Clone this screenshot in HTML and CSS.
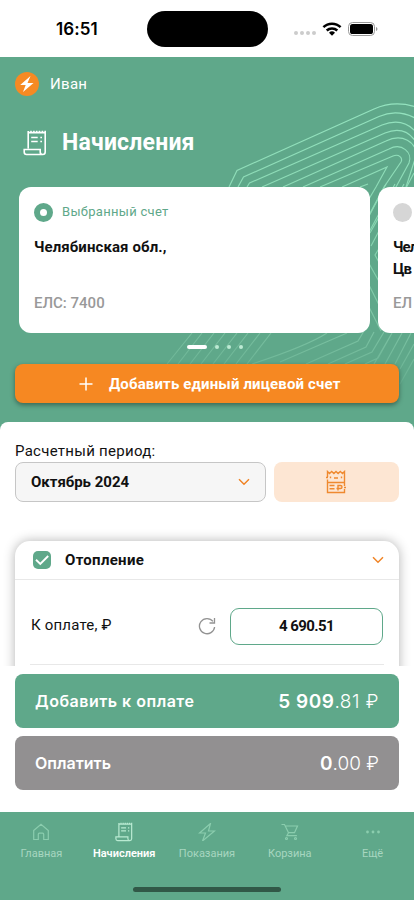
FILE: index.html
```html
<!DOCTYPE html>
<html lang="ru">
<head>
<meta charset="utf-8">
<meta name="viewport" content="width=device-width, initial-scale=1">
<title>Начисления</title>
<link rel="stylesheet" href="styles.css">
</head>
<body>
<svg class="defs" width="0" height="0">
  <symbol id="bill" viewBox="0 0 24 26">
    <path d="M5.200 18.500V1M5.200 2.600h17M8 3V.8M10.900 3V.8M13.700 3V.8M16.500 3V.8M19.400 3V.8M22.200.8V22a2.500 2.500 0 0 1-2.500 2.500H3.500C2 24.500 1.200 23.400 1.200 22v-2.500h16V22a2.500 2.500 0 0 0 2.500 2.500M8.200 7.500h6.500M8.200 11.500h6.500M17.300 7.500H19M17.300 11.500H19" fill="none" stroke="currentColor" stroke-width="1.600"/>
  </symbol>
  <symbol id="chevron" viewBox="0 0 12 8">
    <path d="M1 1.200l5 5 5-5" fill="none" stroke="#f08426" stroke-width="1.500"/>
  </symbol>
</svg>
<div class="screen">
  <div class="status">
    <span class="clock">16:51</span>
    <span class="island"></span>
    <span class="signals">
      <i class="cell"></i><i class="cell"></i><i class="cell"></i><i class="cell"></i>
      <svg class="wifi" viewBox="0 0 20 14"><path d="M1.4 5.2a12.4 12.4 0 0 1 17.2 0M4.7 8.5a7.7 7.7 0 0 1 10.6 0" fill="none" stroke="#000" stroke-width="2.5"/><path d="M10 13.7l-3-3a4.3 4.3 0 0 1 6 0z"/></svg>
      <svg class="battery" viewBox="0 0 30 14"><rect x=".5" y=".5" width="26" height="13" rx="4" fill="none" stroke="#999"/><rect x="2" y="2" width="23" height="10" rx="2.6"/><path d="M28 5v4c2-.8 2-3.2 0-4z" fill="#999"/></svg>
    </span>
  </div>

  <header class="hero">
    <svg class="pattern" viewBox="0 57 414 365">
      <defs><linearGradient id="fade" x1="0" y1="104" x2="0" y2="405" gradientUnits="userSpaceOnUse"><stop offset="0" stop-color="#94e3bf"/><stop offset=".35" stop-color="#8bd9b4"/><stop offset=".75" stop-color="#7cc3a3"/><stop offset="1" stop-color="#60a98b"/></linearGradient></defs>
      <g fill="none" stroke="url(#fade)" stroke-width="1.150">
        <path d="M229 187l8-16.500L374 109q20-9 42-2"/>
        <path d="M238 187l5.500-10L379 116.500q18-8 37 2"/>
        <path d="M247 187l2.500-4L382 125q20-8 33 6"/>
        <path d="M262 187L385 133q20-8 31 9"/>
        <path d="M283 187L386 141c16-8 31 1 30 15l-10 31"/>
        <path d="M303 187l86-38c13-7 24 4 20 14l-13 24-26 46"/>
        <path d="M320 187l73-31c6-2.500 10 2 8 6l-17 25-16 30"/>
        <path d="M342 187l45-20-11 20-10 17M360 187l8-3"/>
        <path d="M386 184l-18 34M395 184l-27 50M404 184l-33 62M380 247l-5 8 6 11M367 260l14 25M367 281l14 28M367 303l14 28M414 173l-8 15"/>
        <path d="M167 364l25-31M178 364l24-31M190 364l24-31M201 364l24-31M213 364l24-31M224 364l24-31M236 364l24-31M247 364l24-31" opacity=".9"/>
        <path d="M252 364q55-18 75-31M280 362l67-29M306 364l52-23 6-10M328 364l38-17 8-15M345 364l27-12 12-20M365 364l13-6 14-25M374 364l18-31M385 364l17-31M395 364l16-31M400 369l14-25M400 384l14-25"/>
      </g>
    </svg>
    <div class="user"><svg class="avatar" viewBox="0 0 24 24"><circle cx="12" cy="12" r="12" fill="#f68a23"/><path d="M15.500 4L5.200 13h5.500L8 20l10.500-9h-6z" fill="#fff"/></svg><span class="t-user">Иван</span></div>
    <div class="heading"><svg class="bill-lg"><use href="#bill"/></svg><h1>Начисления</h1></div>
    <div class="accounts">
      <article class="account">
        <div class="pick"><i class="radio on"></i><span class="t-pick">Выбранный счет</span></div>
        <p class="address">Челябинская обл.,</p>
        <p class="els">ЕЛС: 7400</p>
      </article>
      <article class="account next">
        <div class="pick"><i class="radio"></i></div>
        <p class="address">Чел<br>Цв</p>
        <p class="els">ЕЛ</p>
      </article>
    </div>
    <div class="dots"><b></b><i></i><i></i><i></i></div>
    <button class="add"><svg viewBox="0 0 14 14" width="14" height="14"><path d="M7 .5v13M.5 7h13" stroke="#fff" stroke-width="1.500"/></svg><span class="t-add">Добавить единый лицевой счет</span></button>
  </header>

  <main class="content">
    <div class="label">Расчетный период:</div>
    <div class="filters">
      <div class="month"><span>Октябрь 2024</span><svg class="chev"><use href="#chevron"/></svg></div>
      <div class="receipt"><svg viewBox="0 0 20 24" width="20" height="24" fill="none" stroke="#ef892f" stroke-width="1.400"><path d="M1.500 7V1.500l2 2 2.200-2 2.200 2 2.100-2 2.100 2 2.200-2 2.200 2 2-2V16M1.500 9.500v13h17V19M1.500 12.500h17M4.500 6.500v1.800M8 8h4M15.500 6.500v1.800M3.500 15.500h5M3.500 18.800h5M12 20.500v-5h2.500a1.500 1.500 0 0 1 0 3H10.500M0 7.500h2M18 17.500h2"/></svg></div>
    </div>
    <section class="service">
      <div class="service-head"><svg class="check" viewBox="0 0 18 18"><rect width="18" height="18" rx="5" fill="#5fa88a"/><path d="M3 8.800l4.300 4.200L15.200 5" fill="none" stroke="#fff" stroke-width="1.900"/></svg><span>Отопление</span><svg class="chev"><use href="#chevron"/></svg></div>
      <div class="service-row"><span class="t-due">К оплате, ₽</span><svg class="reload" viewBox="0 0 18 18"><path d="M15 4.400A7.600 7.600 0 1 0 16.600 10M16.500 1v5h-5" fill="none" stroke="#929292" stroke-width="1.300"/></svg><div class="amount">4 690.51</div></div>
      <hr>
    </section>
  </main>

  <section class="checkout">
    <div class="pay"><span class="t-pay">Добавить к оплате</span><span class="sum wide"><b>5 909</b>.81 ₽</span></div>
    <div class="pay off"><span>Оплатить</span><span class="sum"><b>0</b>.00 ₽</span></div>
  </section>

  <nav class="tabs">
    <div class="tab"><svg viewBox="0 0 18 18"><path d="M1.700 7.500L9 1.200l7.300 6.300v9h-4.600v-5.300a1 1 0 0 0-1-1H7.300a1 1 0 0 0-1 1v5.300H1.700z"/></svg><span>Главная</span></div>
    <div class="tab current"><svg class="bill-sm"><use href="#bill"/></svg><span>Начисления</span></div>
    <div class="tab"><svg viewBox="0 0 18 18"><path d="M12.500.5L1.500 10h6l-3 8L16.500 8h-6z"/></svg><span>Показания</span></div>
    <div class="tab"><svg viewBox="0 0 18 18"><path d="M.5 1.500h3l4 8.200-1.600 3h10M4.300 3h12.200l-3 6.700h-6"/><circle cx="5.500" cy="15.500" r="1"/><circle cx="14.500" cy="15.500" r="1"/></svg><span>Корзина</span></div>
    <div class="tab"><svg viewBox="0 0 18 18"><g fill="currentColor" stroke="none"><circle cx="3.500" cy="9" r="1.400"/><circle cx="9" cy="9" r="1.400"/><circle cx="14.500" cy="9" r="1.400"/></g></svg><span>Ещё</span></div>
    <i class="home-bar"></i>
  </nav>
</div>
</body>
</html>
```

FILE: styles.css
```css
* { box-sizing: border-box; }
body { margin: 0; background: #fff; font-family: Roboto, "Liberation Sans", sans-serif; color: #111; }
p, h1 { margin: 0; }
span { white-space: nowrap; }
svg { display: block; flex: none; }
.defs { position: absolute; }
.screen { width: 414px; height: 900px; overflow: hidden; display: flex; flex-direction: column; background: linear-gradient(#fff 57px, #5fa88a 57px, #5fa88a 435px, #fff 435px); }

.status { height: 57px; flex: none; display: flex; align-items: center; padding-left: 56px; }
.clock { width: 91px; font: 600 17px/20px Inter, sans-serif; letter-spacing: .1px; color: #000; }
.island { width: 121px; height: 36px; border-radius: 18px; background: #000; margin-top: 1px; }
.signals { display: flex; align-items: center; margin-left: 26px; height: 16px; }
.cell { width: 4px; height: 4px; border-radius: 2px; background: #ccc; margin: 9px 2px 0 0; }
.wifi { width: 20px; height: 14px; margin-left: 4px; }
.battery { width: 30px; height: 14px; margin-left: 6px; }

.hero { position: relative; height: 365px; flex: none; background: #5fa88a; display: flex; flex-direction: column; color: #fff; }
.hero > * { position: relative; }
.hero .pattern { position: absolute; left: 0; top: 0; width: 414px; height: 365px; }
.user { display: flex; align-items: center; gap: 11px; height: 24px; margin: 15px 0 0 15px; font-size: 15px; letter-spacing: .3px; }
.avatar { width: 24px; height: 24px; }
.heading { display: flex; align-items: center; height: 30px; gap: 15px; margin: 32px 0 0 23px; }
.bill-lg { width: 24px; height: 26px; }
h1 { font-size: 23px; font-weight: 700; line-height: 30px; letter-spacing: .2px; }
.accounts { display: flex; gap: 8px; margin: 29px 0 0 19px; overflow: hidden; }
.account { width: 351px; height: 146px; flex: none; border-radius: 12px; background: #fff; color: #111; padding: 15px 15px 0; font-size: 15px; }
.pick { display: flex; align-items: center; gap: 9px; height: 20px; color: #5fa88a; font-size: 13px; letter-spacing: .3px; }
.t-pick { margin-top: -2px; }
.radio { width: 19px; height: 19px; border-radius: 50%; background: #d6d6d6; }
.radio.on { background: #fff; border: 6px solid #5fa88a; }
.address { height: 58px; margin-top: 14px; line-height: 22px; font-weight: 700; letter-spacing: .1px; }
.els { line-height: 18px; color: #999; font-weight: 500; }
.account.next { width: 36px; padding-right: 0; border-radius: 12px 0 0 12px; }
.next .address { letter-spacing: -.9px; }
.dots { display: flex; align-items: center; justify-content: center; gap: 8px; height: 6px; margin: 11px 0 0 17px; }
.dots b { width: 20px; height: 4px; border-radius: 2px; background: #fff; }
.dots i { width: 4px; height: 4px; border-radius: 2px; background: #bdead4; }
.dots { padding-right: 2px; }
.add { display: flex; align-items: center; height: 39px; margin: 14px 15px 0; padding: 0 0 0 64px; gap: 16px; border: 0; border-radius: 8px; background: #f68822; box-shadow: 0 2px 5px rgba(0, 0, 0, .4); color: #fff; font: 700 15px Roboto, sans-serif; letter-spacing: .15px; }

.content { height: 244px; flex: none; overflow: hidden; background: #fff; border-radius: 8px 8px 0 0; padding: 19px 15px 0; }
.label { height: 21px; line-height: 20px; font-size: 15px; letter-spacing: .28px; }
.filters { display: flex; gap: 8px; height: 40px; }
.month { width: 251px; border: 1px solid #c6c6c6; border-radius: 8px; background: #f6f6f6; display: flex; align-items: center; justify-content: space-between; padding: 0 15px; font-size: 15px; font-weight: 700; }
.chev { width: 12px; height: 8px; }
.receipt { flex: 1; border-radius: 8px; background: #fde6d3; display: flex; align-items: center; justify-content: center; padding-right: 1px; }
.service { height: 160px; margin-top: 39px; border-radius: 15px; background: #fff; box-shadow: 0 0 12px rgba(0, 0, 0, .3); }
.service-head { height: 39px; display: flex; align-items: center; border-bottom: 1px solid #e8e8e8; padding: 0 15px 0 18px; font-size: 15px; font-weight: 700; letter-spacing: .3px; }
.check { width: 18px; height: 18px; margin-right: 14px; }
.service-head .chev { margin-left: auto; }
.service-row { display: flex; align-items: center; height: 92px; padding: 0 16px; font-size: 15px; }
.t-due { letter-spacing: .2px; margin-top: -2px; }
.reload { width: 18px; height: 18px; margin-left: auto; }
.amount { width: 153px; height: 37px; margin-left: 14px; border: 1px solid #5fa88a; border-radius: 9px; display: flex; align-items: center; justify-content: center; font-weight: 700; letter-spacing: -.6px; padding-bottom: 1px; }
hr { border: 0; border-top: 1px solid #e8e8e8; margin: -8px 15px 0; }

.checkout { height: 146px; flex: none; background: #fff; padding: 8px 15px 0; display: flex; flex-direction: column; gap: 8px; }
.pay { height: 54px; border-radius: 8px; background: #5fa88a; color: #fff; display: flex; align-items: center; justify-content: space-between; padding: 0 20px; font: 600 16px Inter, sans-serif; }
.pay.off { background: #929091; }
.t-pay { letter-spacing: .5px; }
.sum { font-size: 19px; font-weight: 300; }
.sum.wide { letter-spacing: .5px; }
.sum b { font-weight: 600; }

.tabs { position: relative; height: 88px; flex: none; background: #5fa88a; display: flex; color: #a7d6c0; }
.tab { width: 20%; display: flex; flex-direction: column; align-items: center; padding-top: 11px; font-size: 11px; }
.tab svg { width: 18px; height: 18px; margin-bottom: 6px; fill: none; stroke: #8bcdae; stroke-width: 1.200; color: #8bcdae; }
.tab span { line-height: 14px; }
.tab.current { color: #fff; font-weight: 600; }
.tab.current svg { color: #b9ead2; stroke: none; height: 20px; margin: -1px 0 5px; }
.home-bar { position: absolute; left: 133px; bottom: 8px; width: 148px; height: 5px; border-radius: 3px; background: #315847; }
```
